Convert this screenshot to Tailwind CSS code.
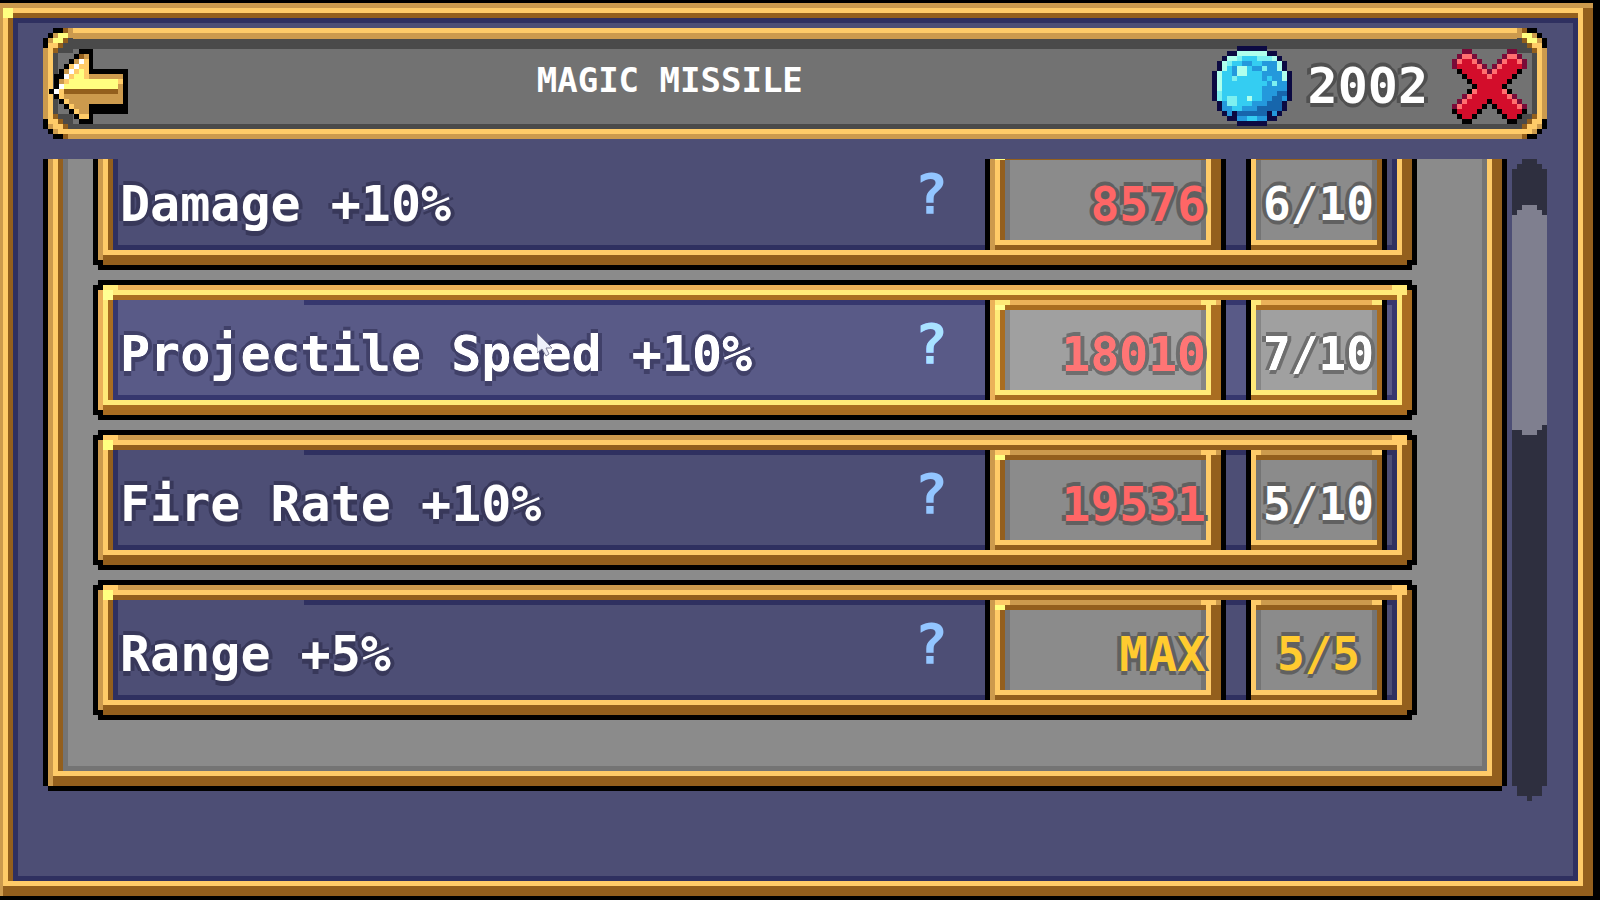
<!DOCTYPE html>
<html lang="en">
<head>
  <meta charset="UTF-8" />
  <meta name="viewport" content="width=device-width, initial-scale=1.0"/>
  <script src="https://cdn.jsdelivr.net/npm/@tailwindcss/browser@4"></script>
  <title>Magic Missile Upgrades</title>
</head>
<body class="bg-black h-screen overflow-hidden pt-[3px] pr-[7px] pb-1 font-['DejaVu_Sans_Mono',monospace] font-bold text-white">

  <!-- OUTER FRAME -->
  <main class="relative h-full flex flex-col bg-[#4d4e75] pl-[43px] pr-[46px] pt-[25px] pb-[95px] shadow-[inset_3px_0_#cc9a4d,inset_0_5px_#cc9a4d,inset_-10px_0_#935f1d,inset_0_-10px_#935f1d,inset_8px_0_#ffcb68,inset_0_10px_#ffcb68,inset_-15px_0_#ffcb68,inset_0_-15px_#ffcb68,inset_13px_0_#935f1d,inset_0_15px_#935f1d,inset_18px_0_#2f3060,inset_0_20px_#2f3060,inset_-20px_0_#2f3060,inset_0_-20px_#2f3060]">
    <i class="absolute left-[3px] top-[5px] size-[10px] bg-[#ffff80]"></i>

    <!-- HEADER -->
    <header class="relative h-[111px] shrink-0 flex items-center bg-[#727272] pl-[6px] pr-[20px] pt-[5px] shadow-[inset_5px_0_#cc9a4d,inset_-5px_0_#cc9a4d,inset_0_5px_#ffcb68,inset_0_-5px_#cc9a4d,inset_10px_0_#ffcb68,inset_-10px_0_#ffcb68,inset_0_11px_#cc9a4d,inset_0_-10px_#ffcb68,inset_0_21px_#4a4a4a,inset_15px_0_#4a4a4a,inset_-15px_0_#4a4a4a,inset_0_-15px_#4a4a4a]">
      <svg data-art="cornerTop" class="absolute left-0 top-0 w-[30px] h-[25px]"></svg>
      <svg data-art="cornerTop" class="absolute right-0 top-0 w-[30px] h-[25px] -scale-x-100"></svg>
      <svg data-art="cornerBottom" class="absolute left-0 bottom-0 w-[30px] h-[25px]"></svg>
      <svg data-art="cornerBottom" class="absolute right-0 bottom-0 w-[30px] h-[25px] -scale-x-100"></svg>

      <button aria-label="Back" class="relative cursor-pointer"><svg data-art="arrow" class="w-[79px] h-[75px]"></svg></button>
      <h1 class="flex-1 pb-3 text-center text-[34px] leading-none font-bold">MAGIC MISSILE</h1>
      <svg data-art="orb" class="w-20 h-20"></svg>
      <span class="ml-4 text-[50px] leading-none [text-shadow:0_4px_#505050,0_-4px_#505050,4px_0_#505050,-4px_0_#505050]">2002</span>
      <button aria-label="Close" class="relative ml-6 cursor-pointer"><svg data-art="cross" class="w-[75px] h-[75px]"></svg></button>
    </header>

    <!-- UPGRADE LIST -->
    <section class="mt-5 flex-1 min-h-0 flex gap-[5px]">
      <div class="flex-1 mb-[10px] px-[5px] pb-[5px] overflow-hidden">
        <ul id="upgrades" class="h-full flex flex-col justify-end gap-5 pl-[50px] pr-[90px] pb-[71px] bg-[#8b8b8b] shadow-[5px_0_#000,-5px_0_#000,0_5px_#000,inset_5px_0_#cc9a4d,inset_-10px_0_#935f1d,inset_0_-10px_#935f1d,inset_10px_0_#ffcb68,inset_-15px_0_#ffcb68,inset_0_-15px_#ffcb68,inset_15px_0_#935f1d,inset_20px_0_#747474,inset_-20px_0_#747474,inset_0_-20px_#747474]"></ul>
      </div>

      <!-- SCROLLBAR -->
      <div class="w-[35px] bg-[#2e2f3f] pt-[46px] [clip-path:polygon(10px_0,25px_0,25px_5px,30px_5px,30px_10px,35px_10px,35px_calc(100%-15px),30px_calc(100%-15px),30px_calc(100%-5px),20px_calc(100%-5px),20px_100%,15px_100%,15px_calc(100%-5px),5px_calc(100%-5px),5px_calc(100%-15px),0_calc(100%-15px),0_10px,5px_10px,5px_5px,10px_5px)]">
        <div class="h-[230px] bg-[#7f7f8f] [clip-path:polygon(10px_0,25px_0,25px_5px,30px_5px,30px_10px,35px_10px,35px_calc(100%-10px),30px_calc(100%-10px),30px_calc(100%-5px),25px_calc(100%-5px),25px_100%,10px_100%,10px_calc(100%-5px),0_calc(100%-5px),0_10px,5px_10px,5px_5px,10px_5px)]"></div>
      </div>
    </section>
  </main>

  <!-- POINTER -->
  <svg class="absolute left-[537px] top-[333px] w-4 h-6" viewBox="0 0 16 24">
    <path d="M0 0V20L5 16L9 23L12 21L9 15H15Z" fill="#eef0fa" stroke="#85859c" stroke-width="1"/>
  </svg>

  <script>
    const upgrades = [
      { name: "Damage +10%", cost: "8576", level: "6/10" },
      { name: "Projectile Speed +10%", cost: "18010", level: "7/10", active: true },
      { name: "Fire Rate +10%", cost: "19531", level: "5/10" },
      { name: "Range +5%", cost: "MAX", level: "5/5" },
    ];

    // UPGRADE ROWS
    document.getElementById("upgrades").innerHTML = upgrades.map(u => {
      const maxed = u.cost === "MAX";
      return `
        <li class="relative h-[130px] shrink-0 flex items-stretch py-[15px] pl-[22px] pr-[30px] bg-[#4d4e75] bg-[linear-gradient(#2f3060,#2f3060)] bg-no-repeat bg-[position:206px_15px] bg-[size:100%_5px] shadow-[5px_0_#000,-5px_0_#000,0_5px_#000,0_-5px_#000,inset_5px_0_#cc9a4d,inset_0_5px_#cc9a4d,inset_-10px_0_#935f1d,inset_0_-10px_#935f1d,inset_10px_0_#ffcb68,inset_0_10px_#ffcb68,inset_-15px_0_#ffcb68,inset_0_-15px_#ffcb68,inset_15px_0_#935f1d,inset_0_15px_#935f1d,inset_20px_0_#2f3060,inset_-20px_0_#2f3060,inset_0_-20px_#2f3060] ${u.active ? "brightness-115" : ""}">
          <i class="absolute left-0 top-0 size-[5px] bg-black"></i>
          <i class="absolute right-0 top-0 size-[5px] bg-black"></i>
          <i class="absolute left-0 bottom-0 size-[5px] bg-black"></i>
          <i class="absolute right-0 bottom-0 size-[5px] bg-black"></i>
          <i class="absolute left-[5px] top-0 w-[15px] h-[5px] bg-[#ffcb68]"></i>
          <i class="absolute right-[5px] top-0 w-[15px] h-[10px] bg-[#ffcb68]"></i>
          <i class="absolute left-[5px] top-[5px] size-[10px] bg-[#ffff80]"></i>
          <span class="flex-1 self-center pt-2 text-[50px] leading-none whitespace-nowrap [text-shadow:0_5px_#38385a,0_-4px_#38385a,4px_0_#38385a,-4px_0_#38385a]">${u.name}</span>
          <button aria-label="About ${u.name}" class="w-[34px] mr-[42px] pb-3 text-[56px] leading-none text-[#93c5ff] cursor-pointer">?</button>
          <button class="relative w-[231px] pt-2 pr-[15px] flex items-center justify-end bg-[#8b8b8b] text-[48px] leading-none cursor-pointer shadow-[-5px_0_#000,5px_0_#000,inset_5px_0_#cc9a4d,inset_0_5px_#cc9a4d,inset_-10px_0_#935f1d,inset_0_-5px_#935f1d,inset_10px_0_#ffcb68,inset_-15px_0_#ffcb68,inset_0_-10px_#ffcb68,inset_15px_0_#935f1d,inset_0_10px_#935f1d,inset_20px_0_#747474,inset_-20px_0_#747474] [text-shadow:0_4px_#606060,0_-4px_#606060,4px_0_#606060,-4px_0_#606060] ${maxed ? "text-[#ffcb30]" : "text-[#ff6666]"}">
            <i class="absolute left-[5px] top-0 w-[15px] h-[5px] bg-[#ffcb68]"></i>
            <i class="absolute left-[5px] top-[5px] w-[10px] h-[5px] bg-[#ffff80]"></i>
            <i class="absolute right-[5px] top-0 w-[15px] h-[5px] bg-[#ffcb68]"></i>
            ${u.cost}
          </button>
          <span class="relative w-[131px] ml-[30px] pt-2 pl-1 flex items-center justify-center bg-[#8b8b8b] text-[46px] leading-none shadow-[-5px_0_#000,5px_0_#000,inset_0_5px_#cc9a4d,inset_-5px_0_#935f1d,inset_0_-5px_#935f1d,inset_5px_0_#ffcb68,inset_0_10px_#935f1d,inset_0_-10px_#ffcb68,inset_10px_0_#747474,inset_-10px_0_#747474] [text-shadow:0_4px_#606060,0_-4px_#606060,4px_0_#606060,-4px_0_#606060] ${maxed ? "text-[#ffcb30]" : ""}">
            <i class="absolute left-0 top-0 w-[10px] h-[5px] bg-[#ffcb68]"></i>
            <i class="absolute right-0 top-0 w-[10px] h-[5px] bg-[#ffcb68]"></i>
            ${u.level}
          </span>
        </li>`;
    }).join("");

    // PIXEL ART, one character per pixel
    const palette = {
      k: "#000000", T: "#cc9a4d", g: "#ffcb68", h: "#935f1d", y: "#ffff80", w: "#ffffff",
      N: "#4d4e75", D: "#4a4a4a", r: "#d30d2b", P: "#ff6f6f", x: "#7a0a38",
      n: "#0c0a42", m: "#b0ffec", l: "#7df0f0", c: "#34cdf2", b: "#2499dc", d: "#1766ac",
    };
    const art = {
      cornerTop: [
        "NNkkhT",
        "NkTyyT",
        "kTyyhD",
        "kgghDD",
        "TghDDD",
      ],
      cornerBottom: [
        "TghDDD",
        "kgghDD",
        "kTgghD",
        "NkTggg",
        "NNkkhT",
      ],
      arrow: [
        "......kkk.......",
        ".....khTk.......",
        "....kTwgk.......",
        "...kgwggk.......",
        "..kTwgygkkkkkkkk",
        ".kkwgyygTTTTTTTk",
        ".kTgyyyyyyyyyygk",
        ".kwyyyyyyyyyyyTk",
        "kwghhhhhhhhhhhTk",
        ".kgTTTTTTTTTTTTk",
        "..kgTTTTTTTTTTTk",
        "...kgTTTkkkkkkkk",
        "....kgTTkkkkkkkk",
        ".....kggk.......",
        "......kkk.......",
      ],
      orb: [
        ".....nnnnnn.....",
        "...nnmmmmmmnn...",
        "..nmmlccclllmn..",
        ".nmlccbbccbbbmn.",
        ".nmcbmmcbblbbmn.",
        "nmccbmmcccbbbbmn",
        "nmcclcccccbcbbmn",
        "nmcccccccccblbbn",
        "nmccccccccbbbbbn",
        "nlccccccccbbbddn",
        "nlcllccmccbbddbn",
        ".nbllcccbbbdddn.",
        ".nbbccbbbdddddn.",
        "..nbnddddddnbn..",
        "...nnbbccbbnn...",
        ".....nnnnnn.....",
      ],
      cross: [
        "..xx.......xx..",
        ".xPPx.....xPPx.",
        "xPrrPx...xPrrPx",
        "xrrrrPx.xPrrrrx",
        ".krrrrPxPrrrrk.",
        "..krrrrPrrrrk..",
        "...krrrrrrrk...",
        "....krrrrrk....",
        "...kPrrrrrPk...",
        "..xPrrrrrrrPx..",
        ".xPrrrrkrrrrPx.",
        "xPrrrrk.krrrrPx",
        "krrrrk...krrrrk",
        ".krrk.....krrk.",
        "..kk.......kk..",
      ],
    };

    document.querySelectorAll("[data-art]").forEach(svg => {
      const rows = art[svg.dataset.art];
      svg.setAttribute("viewBox", `0 0 ${rows[0].length} ${rows.length}`);
      svg.setAttribute("preserveAspectRatio", "none");
      svg.setAttribute("shape-rendering", "crispEdges");
      svg.innerHTML = rows.map((row, y) => [...row].map((p, x) =>
        p === "." ? "" : `<rect x="${x}" y="${y}" width="1" height="1" fill="${palette[p]}"/>`
      ).join("")).join("");
    });
  </script>
</body>
</html>
